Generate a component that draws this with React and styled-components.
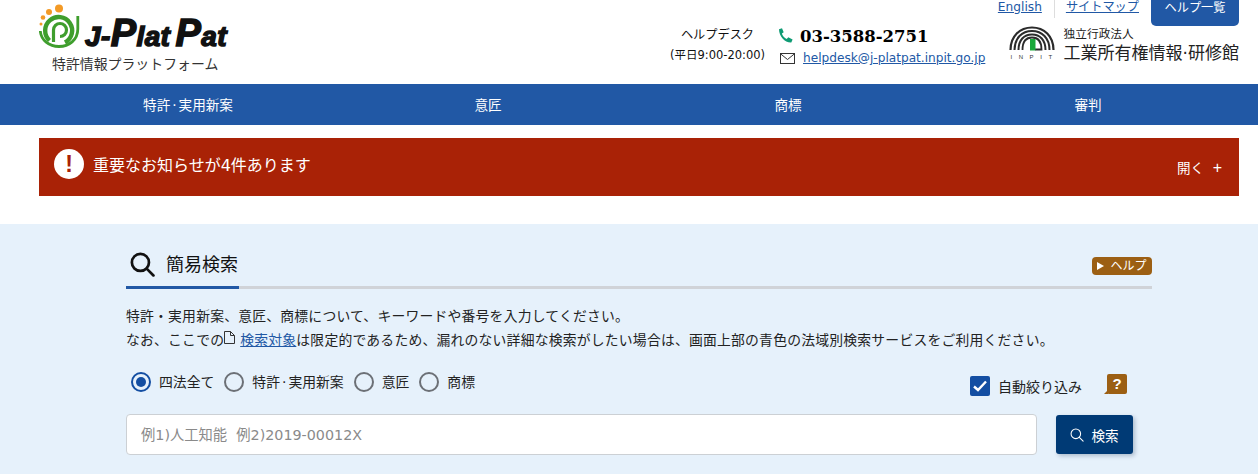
import React from "react";
import styled, { createGlobalStyle } from "styled-components";

const Global = createGlobalStyle`
  html, body { margin: 0; padding: 0; background: #fff; }
  body {
    width: 1258px; height: 474px; overflow: hidden;
    font-family: "DejaVu Sans", "Noto Sans CJK JP", sans-serif;
    color: #222;
  }
  * { box-sizing: border-box; }
`;

const Header = styled.header`
  height: 84px;
  display: flex;
  justify-content: space-between;
  padding: 0 19px 0 39px;
`;
const Brand = styled.div`
  width: 200px;
  display: flex;
  flex-direction: column;
`;
const BrandTop = styled.div`
  display: flex;
  align-items: flex-start;
  height: 52px;
  padding-top: 4px;
`;
const LogoWord = styled.span`
  font-family: "Liberation Sans", sans-serif;
  font-weight: 700;
  font-style: italic;
  font-size: 28px;
  line-height: 32px;
  color: #111;
  margin: 13px 0 0 4px;
  white-space: nowrap;
  letter-spacing: 0.4px;
  word-spacing: -3px;
  -webkit-text-stroke: 1.5px #111;
`;
const LogoCap = styled.b`
  font-size: 38px;
  font-weight: 700;
`;
const Tagline = styled.div`
  font-size: 13.9px;
  line-height: 20px;
  margin: 2px 0 0 13px;
  color: #333;
  white-space: nowrap;
`;
const HeaderRight = styled.div`
  width: 569px;
  display: flex;
  flex-direction: column;
`;
const TopLinks = styled.div`
  height: 26px;
  display: flex;
  justify-content: flex-end;
  align-items: flex-start;
`;
const TopLink = styled.a`
  font-size: 12.2px;
  line-height: 15px;
  color: #2158a5;
  text-decoration: underline;
  padding-right: ${(p) => p.$pr}px;
  white-space: nowrap;
`;
const TopDivider = styled.span`
  width: 1px;
  height: 18px;
  background: #ddd;
  margin-right: 11px;
`;
const HelpList = styled.a`
  width: 88px;
  height: 26px;
  background: #2158a5;
  color: #fff;
  font-size: 12.2px;
  line-height: 16px;
  text-align: center;
  border-radius: 0 0 5px 5px;
`;
const ContactRow = styled.div`
  display: flex;
  align-items: flex-start;
`;
const DeskCol = styled.div`
  width: 95px;
  text-align: center;
  color: #111;
`;
const DeskName = styled.div`
  font-size: 12.2px;
  line-height: 18px;
`;
const DeskHours = styled.div`
  font-size: 11.5px;
  line-height: 16px;
  margin-top: 3px;
  white-space: nowrap;
`;
const PhoneCol = styled.div`
  width: 232px;
  margin-left: 13px;
  display: flex;
  flex-direction: column;
`;
const PhoneRow = styled.div`
  display: flex;
  align-items: center;
  height: 20px;
  gap: 7px;
`;
const PhoneNum = styled.span`
  font-family: "DejaVu Serif", serif;
  font-weight: 700;
  font-size: 16.5px;
  line-height: 20px;
  color: #000;
  margin-top: 1px;
  white-space: nowrap;
`;
const MailRow = styled.div`
  display: flex;
  align-items: center;
  height: 20px;
  margin-top: 2px;
  padding-left: 2px;
  gap: 8px;
`;
const MailLink = styled.a`
  font-size: 12.15px;
  line-height: 16px;
  color: #2158a5;
  text-decoration: underline;
  white-space: nowrap;
`;
const InpitWrap = styled.div`
  display: flex;
  gap: 9px;
`;
const InpitMark = styled.div`
  width: 46px;
  display: flex;
  flex-direction: column;
  align-items: center;
`;
const InpitLetters = styled.span`
  font-family: "Liberation Sans", sans-serif;
  font-size: 6px;
  line-height: 7px;
  letter-spacing: 6.6px;
  margin-right: -6px;
  color: #333;
  white-space: nowrap;
`;
const InpitText = styled.div`
  display: flex;
  flex-direction: column;
  white-space: nowrap;
  color: #222;
`;
const InpitSmall = styled.span`
  font-size: 11.7px;
  line-height: 16px;
`;
const InpitBig = styled.span`
  font-size: 17px;
  line-height: 23px;
`;

const Nav = styled.nav`
  height: 41px;
  background: #2158a5;
  display: grid;
  grid-template-columns: repeat(4, 300px);
  padding-left: 38px;
  align-items: center;
`;
const NavItem = styled.a`
  color: #fff;
  font-size: 13.6px;
  line-height: 42px;
  text-align: center;
`;
const MidDot = styled.span`
  margin: 0 2px;
`;

const NoticeArea = styled.div`
  height: 99px;
  padding: 13px 19px 0 39px;
`;
const Notice = styled.div`
  height: 58px;
  background: #a92206;
  display: flex;
  align-items: center;
  padding: 0 17px 0 15px;
  color: #fff;
`;
const AlertDot = styled.span`
  width: 30px;
  height: 30px;
  border-radius: 50%;
  background: #fff;
  color: #a92206;
  font-family: "Liberation Sans", sans-serif;
  font-weight: 700;
  font-size: 23px;
  line-height: 30px;
  text-align: center;
  margin-top: -6px;
`;
const NoticeText = styled.span`
  font-size: 16px;
  line-height: 24px;
  margin: -3px 0 0 9px;
  flex: 1;
`;
const NoticeOpen = styled.span`
  width: 45px;
  font-size: 13.5px;
  line-height: 18px;
  margin-top: 2px;
  white-space: nowrap;
  display: flex;
  justify-content: space-between;
`;
const PlusMark = styled.span`
  font-family: "Liberation Sans", sans-serif;
  font-size: 16px;
`;

const Panel = styled.main`
  height: 250px;
  background: #e6f1fb;
  padding: 0 106px 0 126px;
`;
const TitleRow = styled.div`
  height: 65px;
  display: flex;
  border-bottom: 3px solid #d0d3d8;
  justify-content: space-between;
  align-items: flex-end;
`;
const TitleTab = styled.div`
  height: 37px;
  margin-bottom: -3px;
  border-bottom: 3px solid #2158a5;
  width: 113px;
  display: flex;
  gap: 11px;
  padding-left: 4px;
  color: #111;
`;
const TitleText = styled.h1`
  margin: 0;
  font-size: 18px;
  font-weight: 400;
  line-height: 26px;
  white-space: nowrap;
`;
const HelpBadge = styled.a`
  width: 60px;
  height: 18px;
  margin-bottom: 11px;
  background: #9c5f13;
  color: #fff;
  border-radius: 4px;
  display: flex;
  align-items: center;
  justify-content: center;
  gap: 6px;
  font-size: 12px;
  line-height: 18px;
`;
const Lead = styled.p`
  margin: 15px 0 0;
  font-size: 13.83px;
  letter-spacing: 0.2px;
  line-height: 24px;
  color: #222;
  white-space: nowrap;
`;
const DocLink = styled.a`
  color: #2158a5;
  text-decoration: underline;
  margin-left: 5px;
`;
const DocMark = styled.svg`
  vertical-align: 1px;
`;
const OptionsRow = styled.div`
  display: flex;
  justify-content: space-between;
  height: 45px;
  margin-top: 17px;
  padding-left: 5px;
`;
const Radios = styled.div`
  display: flex;
  align-items: flex-start;
  padding-top: 3px;
`;
const RadioLabel = styled.label`
  display: flex;
  align-items: center;
  font-size: 13.83px;
  line-height: 20px;
  margin-right: 10px;
  gap: 8px;
  white-space: nowrap;
`;
const RadioMark = styled.span`
  width: 20px;
  height: 20px;
  border-radius: 50%;
  border: 2px solid ${(p) => (p.$on ? "#134ea2" : "#6c7076")};
  display: flex;
  align-items: center;
  justify-content: center;
  &::after {
    content: "";
    width: 10px;
    height: 10px;
    border-radius: 50%;
    background: ${(p) => (p.$on ? "#134ea2" : "transparent")};
  }
`;
const AutoGroup = styled.div`
  display: flex;
  align-items: flex-start;
  padding: 7px 25px 0 0;
`;
const CheckMark = styled.span`
  width: 20px;
  height: 20px;
  border-radius: 2px;
  background: #134ea2;
  display: flex;
  align-items: center;
  justify-content: center;
  margin-right: 8px;
`;
const AutoLabel = styled.span`
  font-size: 14px;
  line-height: 20px;
  margin-top: 1px;
  white-space: nowrap;
`;
const Question = styled.span`
  position: relative;
  width: 20px;
  height: 20px;
  margin: -2px 0 0 25px;
  background: #9c5f13;
  color: #fff;
  border-radius: 2px;
  font-family: "Liberation Sans", sans-serif;
  font-weight: 700;
  font-size: 15px;
  line-height: 20px;
  text-align: center;
  &::after {
    content: "";
    position: absolute;
    left: -3px;
    bottom: 0;
    border-style: solid;
    border-width: 0 0 4px 4px;
    border-color: transparent transparent #9c5f13 transparent;
  }
`;
const SearchRow = styled.div`
  display: flex;
  align-items: center;
`;
const SearchInput = styled.input`
  width: 911px;
  height: 41px;
  border: 1px solid #ccd0d4;
  border-radius: 4px;
  background: #fff;
  padding: 0 14px;
  font-family: inherit;
  font-size: 14.3px;
  &::placeholder { color: #8a8a8a; opacity: 1; }
`;
const SearchButton = styled.button`
  width: 77px;
  height: 39px;
  margin-left: 19px;
  border: 0;
  border-radius: 3px;
  background: #003a75;
  color: #fff;
  font-family: inherit;
  font-size: 13.6px;
  display: flex;
  align-items: center;
  justify-content: center;
  gap: 7px;
  padding: 0;
  box-shadow: 2px 2px 4px rgba(0, 30, 70, 0.25);
`;

const BrandLogo = () => (
  <svg width="42" height="44" viewBox="0 0 42 44" fill="none">
    <circle cx="20" cy="4.5" r="4" fill="#f39a26" />
    <circle cx="10" cy="8" r="3" fill="#f39a26" />
    <circle cx="4" cy="13.5" r="2.3" fill="#f39a26" />
    <circle cx="2" cy="20" r="1.5" fill="#f39a26" />
    <path d="M1.3 27 C2 36 10 42.5 20 42.5 C30 42.5 38.8 36 38.8 25 V12" stroke="#3f9e2d" strokeWidth="2.8" />
    <path d="M10.5 36.5 A13.5 13.5 0 1 1 26 38.5" stroke="#3f9e2d" strokeWidth="4.4" />
    <path d="M14.5 38 V26 A6.5 6.5 0 1 1 21 32.5" stroke="#3f9e2d" strokeWidth="3.2" />
  </svg>
);

const PhoneIcon = () => (
  <svg width="15" height="16" viewBox="0 0 15 16">
    <path d="M1 1.2 L4 0.3 L5.7 4.3 L3.9 5.6 C4.6 7.9 6.3 9.9 8.7 11 L10.3 9.3 L14.6 11.6 L13.3 14.6 C7 15 1 8 1 1.2 Z" fill="#0f9b74" />
  </svg>
);

const MailIcon = () => (
  <svg width="15" height="11" viewBox="0 0 15 11" fill="none" stroke="#333" strokeWidth="1">
    <rect x="0.5" y="0.5" width="14" height="10" />
    <path d="M0.5 0.8 L7.5 6.5 L14.5 0.8" />
  </svg>
);

const InpitLogo = () => (
  <svg width="46" height="28" viewBox="0 0 46 28" fill="none" stroke="#2b2b2b">
    <path d="M1.5 24 C1.5 10 11 1.5 23 1.5 C35 1.5 44.5 10 44.5 24" strokeWidth="2.2" />
    <path d="M5.5 24 C5.5 12 13 5 23 5 C33 5 40.5 12 40.5 24" strokeWidth="2" />
    <path d="M9.5 24 C9.5 14 15 8.5 23 8.5 C31 8.5 36.5 14 36.5 24" strokeWidth="2" />
    <path d="M13.5 24 C13.5 15 17.5 11.5 23 11.5 C28.5 11.5 32.5 15 32.5 23.5 H26" strokeWidth="1.8" />
    <rect x="21" y="13" width="5.5" height="11.5" fill="#19a83a" stroke="none" />
  </svg>
);

const SearchGlyph = ({ size, color, width }) => (
  <svg width={size} height={size} viewBox="0 0 24 24" fill="none" stroke={color} strokeWidth={width} strokeLinecap="round">
    <circle cx="10" cy="10" r="8.2" />
    <path d="M16 16 L22.5 22.5" />
  </svg>
);

const DocIcon = () => (
  <DocMark width="11" height="13" viewBox="0 0 11 13" fill="none" stroke="#333" strokeWidth="1">
    <path d="M0.5 0.5 H6.5 L10.5 4.5 V12.5 H0.5 Z M6.5 0.5 V4.5 H10.5" />
  </DocMark>
);

const PlayIcon = () => (
  <svg width="7" height="8" viewBox="0 0 7 8"><path d="M0 0 L7 4 L0 8 Z" fill="#fff" /></svg>
);

const CheckIcon = () => (
  <svg width="14" height="12" viewBox="0 0 14 12" fill="none" stroke="#fff" strokeWidth="2.4">
    <path d="M1 6.5 L5 10 L13 1.5" />
  </svg>
);

const PatentLabel = () => <>特許<MidDot>·</MidDot>実用新案</>;

const radios = [
  { key: "all", label: "四法全て", on: true },
  { key: "patent", label: <PatentLabel /> },
  { key: "design", label: "意匠" },
  { key: "mark", label: "商標" },
];
const navs = [
  { key: "patent", label: <PatentLabel /> },
  { key: "design", label: "意匠" },
  { key: "mark", label: "商標" },
  { key: "trial", label: "審判" },
];

export default function App() {
  return (
    <>
      <Global />
      <Header>
        <Brand>
          <BrandTop>
            <BrandLogo />
            <LogoWord>J-<LogoCap>P</LogoCap>lat <LogoCap>P</LogoCap>at</LogoWord>
          </BrandTop>
          <Tagline>特許情報プラットフォーム</Tagline>
        </Brand>
        <HeaderRight>
          <TopLinks>
            <TopLink $pr={12}>English</TopLink>
            <TopDivider />
            <TopLink $pr={12}>サイトマップ</TopLink>
            <HelpList>ヘルプ一覧</HelpList>
          </TopLinks>
          <ContactRow>
            <DeskCol>
              <DeskName>ヘルプデスク</DeskName>
              <DeskHours>(平日9:00-20:00)</DeskHours>
            </DeskCol>
            <PhoneCol>
              <PhoneRow>
                <PhoneIcon />
                <PhoneNum>03-3588-2751</PhoneNum>
              </PhoneRow>
              <MailRow>
                <MailIcon />
                <MailLink>helpdesk@j-platpat.inpit.go.jp</MailLink>
              </MailRow>
            </PhoneCol>
            <InpitWrap>
              <InpitMark>
                <InpitLogo />
                <InpitLetters>INPIT</InpitLetters>
              </InpitMark>
              <InpitText>
                <InpitSmall>独立行政法人</InpitSmall>
                <InpitBig>工業所有権情報·研修館</InpitBig>
              </InpitText>
            </InpitWrap>
          </ContactRow>
        </HeaderRight>
      </Header>
      <Nav>
        {navs.map((n) => <NavItem key={n.key}>{n.label}</NavItem>)}
      </Nav>
      <NoticeArea>
        <Notice>
          <AlertDot>!</AlertDot>
          <NoticeText>重要なお知らせが4件あります</NoticeText>
          <NoticeOpen><span>開く</span><PlusMark>+</PlusMark></NoticeOpen>
        </Notice>
      </NoticeArea>
      <Panel>
        <TitleRow>
          <TitleTab>
            <SearchGlyph size={25} color="#111" width={2.6} />
            <TitleText>簡易検索</TitleText>
          </TitleTab>
          <HelpBadge><PlayIcon />ヘルプ</HelpBadge>
        </TitleRow>
        <Lead>
          特許・実用新案、意匠、商標について、キーワードや番号を入力してください。<br />
          なお、ここでの<DocIcon /><DocLink>検索対象</DocLink>は限定的であるため、漏れのない詳細な検索がしたい場合は、画面上部の青色の法域別検索サービスをご利用ください。
        </Lead>
        <OptionsRow>
          <Radios>
            {radios.map((r) => (
              <RadioLabel key={r.key}>
                <RadioMark $on={r.on} />
                <span>{r.label}</span>
              </RadioLabel>
            ))}
          </Radios>
          <AutoGroup>
            <CheckMark><CheckIcon /></CheckMark>
            <AutoLabel>自動絞り込み</AutoLabel>
            <Question>?</Question>
          </AutoGroup>
        </OptionsRow>
        <SearchRow>
          <SearchInput placeholder="例1)人工知能  例2)2019-00012X" />
          <SearchButton><SearchGlyph size={14} color="#fff" width={1.8} />検索</SearchButton>
        </SearchRow>
      </Panel>
    </>
  );
}
